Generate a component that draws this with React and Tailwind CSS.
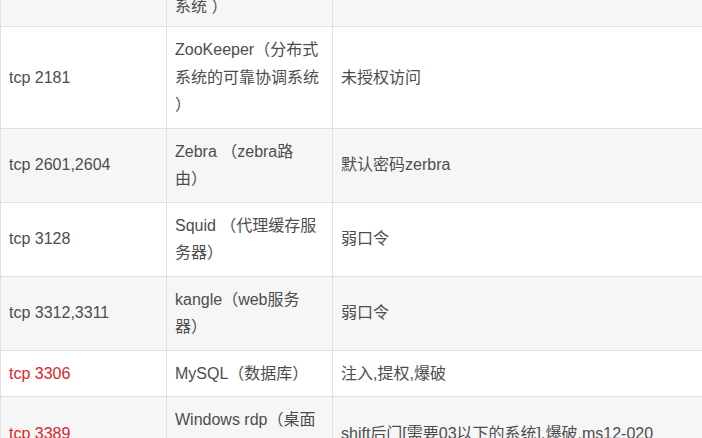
import React from 'react';

const rows = [
  { port: 'tcp 2082,2083', name: 'cPanel主机管理\n系统 ）', vuln: '弱口令', tail: true },
  { port: 'tcp 2181', name: 'ZooKeeper（分布式\n系统的可靠协调系统\n）', vuln: '未授权访问' },
  { port: 'tcp 2601,2604', name: 'Zebra （zebra路\n由）', vuln: '默认密码zerbra' },
  { port: 'tcp 3128', name: 'Squid （代理缓存服\n务器）', vuln: '弱口令' },
  { port: 'tcp 3312,3311', name: 'kangle（web服务\n器）', vuln: '弱口令' },
  { port: 'tcp 3306', name: 'MySQL（数据库）', vuln: '注入,提权,爆破', red: true },
  { port: 'tcp 3389', name: 'Windows rdp（桌面\n协议）', vuln: 'shift后门[需要03以下的系统],爆破,ms12-020', red: true },
];

const App = () => {
  return (
    <div
      className="w-[702px] h-[438px] overflow-hidden bg-white"
      style={{ fontFamily: '"Liberation Sans", "Noto Sans CJK SC", sans-serif' }}
    >
      <table className="w-[710px] mt-[-48px] border-collapse table-fixed text-[16px] leading-[27.5px] text-[#4d4d4d]">
        <colgroup>
          <col className="w-[166px]" />
          <col className="w-[166px]" />
          <col />
        </colgroup>
        <tbody>
          {rows.map((row, index) => (
            <tr key={index} className={index % 2 === 0 ? 'bg-[#f6f6f6]' : 'bg-white'}>
              <td className={`border border-[#e0e0e0] px-2 py-[9px] align-middle ${row.red ? 'text-[#d9262c]' : ''}`}>
                {row.port}
              </td>
              <td
                className={`border border-[#e0e0e0] px-2 align-middle whitespace-pre-line ${
                  row.tail ? 'pt-[12px] pb-[6px]' : 'py-[9px]'
                }`}
              >
                {row.name}
              </td>
              <td className="border border-[#e0e0e0] px-2 py-[9px] align-middle">{row.vuln}</td>
            </tr>
          ))}
        </tbody>
      </table>
    </div>
  );
};

export default App;
